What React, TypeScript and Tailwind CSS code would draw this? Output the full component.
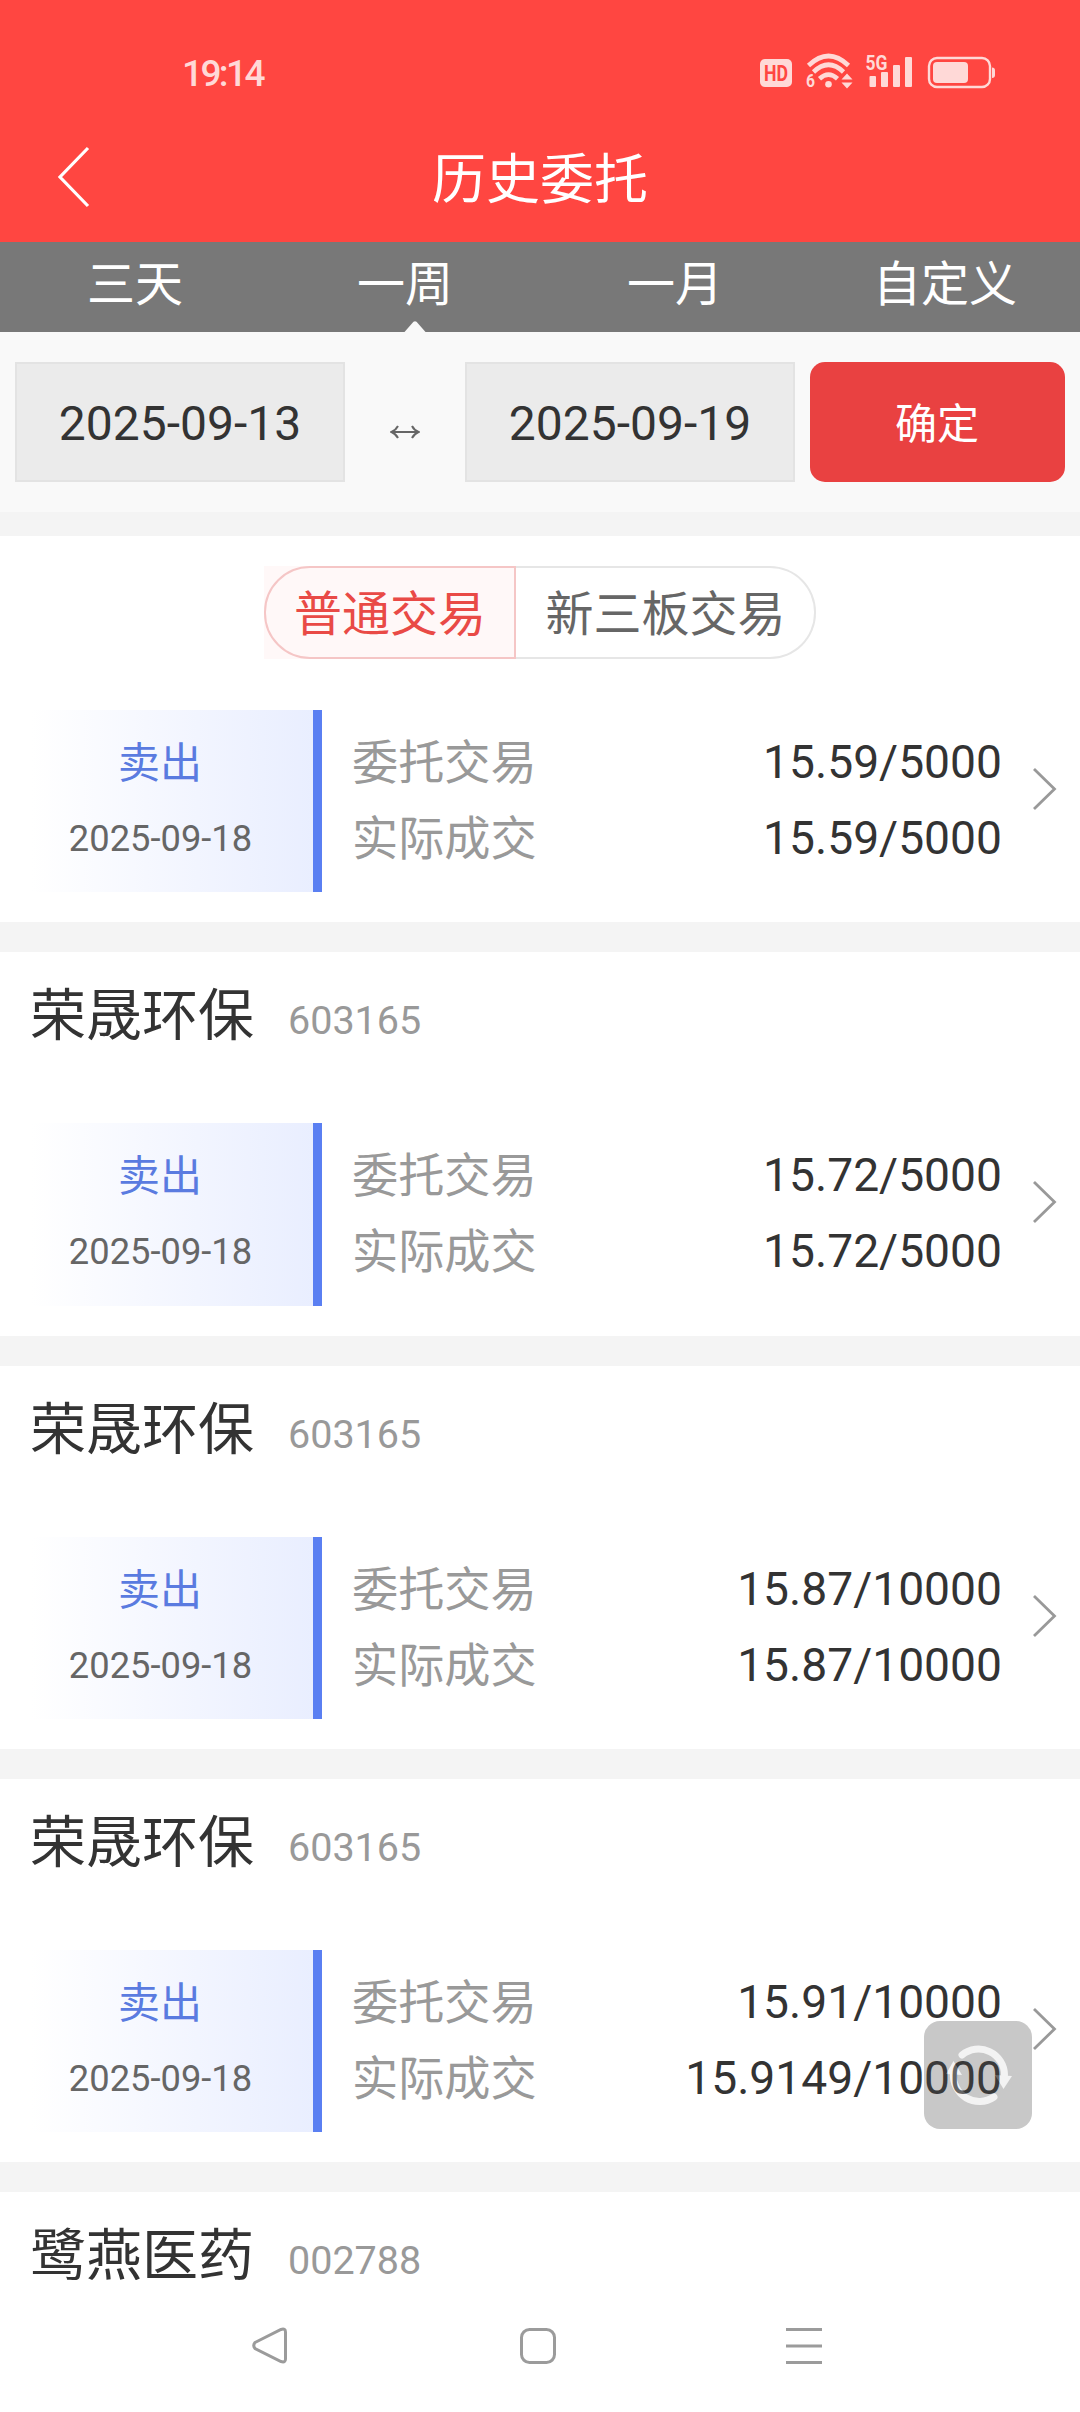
import React from "react";

const CJK = "font-['Roboto','Noto_Sans_CJK_SC',sans-serif]";

type Order = { name: string; code: string; entrust: string; deal: string };

const orders: Order[] = [
  { name: "", code: "", entrust: "15.59/5000", deal: "15.59/5000" },
  { name: "荣晟环保", code: "603165", entrust: "15.72/5000", deal: "15.72/5000" },
  { name: "荣晟环保", code: "603165", entrust: "15.87/10000", deal: "15.87/10000" },
  { name: "荣晟环保", code: "603165", entrust: "15.91/10000", deal: "15.9149/10000" },
];

function StatusIcons() {
  return (
    <svg width="240" height="40" viewBox="758 52 240 40" className="text-[#ffd9d7]" fill="currentColor">
      {/* HD badge */}
      <rect x="760" y="59" width="32" height="28" rx="5" />
      <text x="776" y="81" textAnchor="middle" fontSize="22.5" fontWeight="700" fontFamily="Roboto" textLength="24" lengthAdjust="spacingAndGlyphs" fill="#ff4641">HD</text>
      {/* Wi-Fi */}
      <g fill="none" stroke="currentColor" strokeWidth="4.6">
        <path d="M808.5 65.5 Q828.5 46.5 848.5 65.5" />
        <path d="M813.5 72 Q828.5 57.5 843.5 72" />
        <path d="M819.5 78.8 Q828.5 70.5 837.5 78.8" />
      </g>
      <circle cx="828.5" cy="84.3" r="3.3" />
      <text x="806" y="87" fontSize="18" fontWeight="700" fontFamily="Roboto" textLength="9" lengthAdjust="spacingAndGlyphs">6</text>
      <path d="M847 73.5 l5.5 6 h-11z M847 88.5 l5.5 -6 h-11z" />
      {/* Mobile signal */}
      <text x="865.5" y="70" fontSize="21" fontWeight="700" fontFamily="Roboto" textLength="22" lengthAdjust="spacingAndGlyphs">5G</text>
      <rect x="869.5" y="76" width="6.5" height="11" rx="1" />
      <rect x="881" y="72" width="7" height="15" rx="1" />
      <rect x="893" y="65" width="7" height="22" rx="1" />
      <rect x="905" y="57" width="7" height="30" rx="1" />
      {/* Battery */}
      <rect x="929" y="58" width="61" height="29" rx="8" fill="none" stroke="currentColor" strokeWidth="2.4" />
      <rect x="933" y="62" width="35" height="21" rx="4" />
      <path d="M992 67.5 q3 0 3 3 v4.500 q0 3 -3 3z" />
    </svg>
  );
}

function Tab({ label, active }: { label: string; active?: boolean }) {
  return (
    <div className="relative flex-1 text-center text-[48px] leading-[86px] text-white">
      {label}
      {active && (
        <svg className="absolute bottom-0 left-[134px]" width="22" height="11" viewBox="0 0 22 11">
          <path d="M0.5 11 L9.5 0.8 Q11 -0.5 12.5 0.8 L21.5 11z" fill="#f9f9f9" />
        </svg>
      )}
    </div>
  );
}

function DateBox({ value }: { value: string }) {
  return (
    <div className="h-[120px] w-[330px] border-2 border-[#e3e3e3] bg-[#ebebeb] text-center text-[48px] leading-[120px] text-[#333]">
      {value}
    </div>
  );
}

function OrderHeading({ name, code }: { name: string; code: string }) {
  return (
    <div className="flex h-[171.03px] items-baseline pl-[30px] leading-[128px]">
      <span className="text-[56px] text-[#333]">{name}</span>
      <span className="relative -top-px ml-[34px] text-[39.5px] text-[#999]">{code}</span>
    </div>
  );
}

function OrderBody({ entrust, deal }: { entrust: string; deal: string }) {
  return (
    <div className="flex h-[182.3px]">
      <div className="flex w-[322px] flex-col items-center border-r-[9px] border-[#5a7ff2] bg-[linear-gradient(90deg,#fff_10%,#e9eeff_100%)] pl-[7px] pt-[16px]">
        <span className="text-[42px] leading-[76px] text-[#5a7be0]">卖出</span>
        <span className="ml-px text-[36.3px] leading-[74px] text-[#666]">2025-09-18</span>
      </div>
      <div className="ml-[30px] flex w-[650px] flex-col pt-[14px] text-[46.2px] leading-[76px]">
        <div className="flex justify-between">
          <span className="relative top-px text-[#999]">委托交易</span>
          <span className="text-[#333]">{entrust}</span>
        </div>
        <div className="flex justify-between">
          <span className="relative top-px text-[#999]">实际成交</span>
          <span className="text-[#333]">{deal}</span>
        </div>
      </div>
      <svg className="ml-[30px] mt-[56px]" width="26" height="46" viewBox="0 0 26 46" fill="none" stroke="#999" strokeWidth="2.8">
        <path d="M2 3 L22.5 23 L2 43" />
      </svg>
    </div>
  );
}

export default function App() {
  return (
    <div className={`${CJK} relative flex h-[2412px] w-[1080px] flex-col overflow-hidden bg-white`}>
      <header className="h-[242px] shrink-0 bg-[#ff4641]">
        <div className="flex h-[120px] items-start justify-between pl-[182px] pr-[82px] pt-[52px]">
          <span className="text-[37px] font-medium leading-[43px] tracking-[-2.6px] text-[#ffd9d7]">19:14</span>
          <StatusIcons />
        </div>
        <div className="flex h-[122px] items-start">
          <svg className="ml-[56px] mt-[26px]" width="36" height="64" viewBox="0 0 36 64" fill="none" stroke="#fff" strokeWidth="3.2">
            <path d="M32 2 L4 31 L32 60" />
          </svg>
          <h1 className="w-[896px] text-center text-[54px] leading-[122px] text-white">历史委托</h1>
        </div>
      </header>

      <nav className="flex h-[90px] shrink-0 bg-[#787878]">
        <Tab label="三天" />
        <Tab label="一周" active />
        <Tab label="一月" />
        <Tab label="自定义" />
      </nav>

      <section className="flex h-[180px] shrink-0 items-center bg-[#f9f9f9] px-[15px]">
        <DateBox value="2025-09-13" />
        <div className="flex w-[120px] justify-center pt-[20px]">
          <svg width="30" height="14" viewBox="0 0 30 14" fill="none" stroke="#666" strokeWidth="2">
            <path d="M2 7 H28 M8 1 Q6 5 1.5 7 Q6 9 8 13 M22 1 Q24 5 28.5 7 Q24 9 22 13" />
          </svg>
        </div>
        <DateBox value="2025-09-19" />
        <button className="ml-[15px] h-[120px] w-[255px] rounded-[15px] bg-[#e94141] pr-px pt-[5px] text-[42px] leading-[115px] text-white">确定</button>
      </section>
      <div className="h-6 shrink-0 bg-[#f4f4f4]" />

      <div className="flex h-[174.1px] shrink-0 pl-[264px] pt-[30px]">
        <div className="h-[93px] w-[252px] bg-[#fff8f8]">
          <div className="h-full rounded-l-[46px] border-2 border-[#f5c6c6] text-center text-[48px] leading-[94px] text-[#e94a46]">普通交易</div>
        </div>
        <div className="h-[93px] w-[300px] rounded-r-[46px] border-2 border-l-0 border-[#e6e6e6] pl-px text-center text-[48px] leading-[94px] text-[#666]">新三板交易</div>
      </div>

      <main className="flex shrink-0 flex-col">
        {orders.map((o, i) => (
          <section key={i}>
            {o.name && <OrderHeading name={o.name} code={o.code} />}
            <OrderBody entrust={o.entrust} deal={o.deal} />
            <div className="mt-[30px] h-[30px] bg-[#f4f4f4]" />
          </section>
        ))}
        <OrderHeading name="鹭燕医药" code="002788" />
      </main>

      {/* Floating refresh button */}
      <div className="absolute left-[924px] top-[2021px] h-[108px] w-[108px] rounded-[16px] bg-[#4b4b4b] opacity-30">
        <svg width="108" height="108" viewBox="0 0 108 108" fill="none" stroke="#d8d8d8" strokeWidth="7">
          <path d="M38 34 A26 26 0 0 1 80.5 54" strokeLinecap="round" />
          <path d="M70 76 A26 26 0 0 1 29.5 52" strokeLinecap="round" />
          <path d="M71 54 L88 55 L79.5 68z" fill="#d8d8d8" stroke="none" />
          <path d="M22 53 L38 54 L29.5 40z" fill="#d8d8d8" stroke="none" />
        </svg>
      </div>

      <footer className="absolute inset-x-0 bottom-0 flex h-[132px] items-center justify-center bg-white">
        <svg width="1080" height="132" viewBox="0 2280 1080 132" fill="none" stroke="#9b9b9b" strokeWidth="3">
          <path d="M255 2342.5 L281 2329.5 Q285.5 2328 285.5 2332 V2359 Q285.5 2363 281 2361.5 L255 2348.5 Q252.5 2345.5 255 2342.5z" />
          <rect x="521.5" y="2329.5" width="33" height="33" rx="8" />
          <path d="M786 2329.5 H822 M786 2346 H822 M786 2362.5 H822" />
        </svg>
      </footer>
    </div>
  );
}
